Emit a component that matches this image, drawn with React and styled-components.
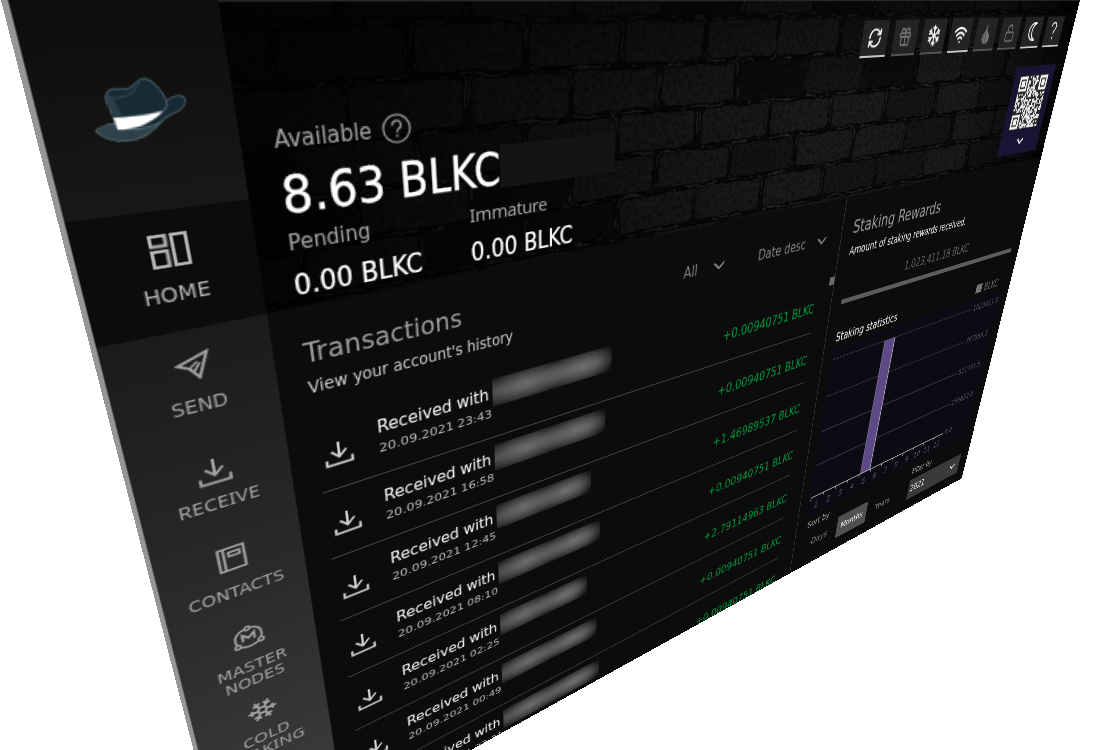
import React from "react";
import styled, { createGlobalStyle, css } from "styled-components";
import { RefreshCw, Gift, Wifi, LockOpen, Snowflake } from "lucide-react";
import { FaRegSnowflake } from "react-icons/fa";

const W = 1100;
const H = 726;

// Screen positions of the window's corners: top-left, top-right, bottom-right, bottom-left.
const CORNERS = [[8, 0], [1080, 0], [961.7, 478.3], [231.7, 882.4]];

function perspective([p0, p1, p2, p3], w, h) {
  const dx1 = p1[0] - p2[0], dx2 = p3[0] - p2[0], sx = p0[0] - p1[0] + p2[0] - p3[0];
  const dy1 = p1[1] - p2[1], dy2 = p3[1] - p2[1], sy = p0[1] - p1[1] + p2[1] - p3[1];
  const det = dx1 * dy2 - dx2 * dy1;
  const g = (sx * dy2 - dx2 * sy) / det;
  const k = (dx1 * sy - sx * dy1) / det;
  const a = p1[0] - p0[0] + g * p1[0], b = p3[0] - p0[0] + k * p3[0];
  const d = p1[1] - p0[1] + g * p1[1], e = p3[1] - p0[1] + k * p3[1];
  return `matrix3d(${[a / w, d / w, 0, g / w, b / h, e / h, 0, k / h, 0, 0, 1, 0, p0[0], p0[1], 0, 1]
    .map((n) => n.toFixed(9)).join(",")})`;
}

const Global = createGlobalStyle`
  html, body { margin: 0; background: #fff; }
  body { width: 1102px; height: 750px; overflow: hidden; }
  * { box-sizing: border-box; }
`;

const Scene = styled.div`
  width: 1102px;
  height: 750px;
  overflow: hidden;
  background: #fff;
`;

const Window = styled.div`
  display: flex;
  width: ${W}px;
  height: ${H}px;
  transform-origin: 0 0;
  transform: ${perspective(CORNERS, W, H)};
  background: #0c0c0c;
  box-shadow: -3px 0 0 #969696;
  color: #d0d0d0;
  font-family: "DejaVu Sans Condensed", "DejaVu Sans", sans-serif;
  font-stretch: condensed;
  white-space: nowrap;
`;

const Sidebar = styled.nav`
  width: 100px;
  height: ${H}px;
  overflow: hidden;
  background: linear-gradient(#1a1a1a 180px, #404040);
  display: flex;
  flex-direction: column;
`;

const LogoBox = styled.div`
  flex: none;
  height: 120px;
  display: flex;
  align-items: center;
  justify-content: center;
  background: linear-gradient(#0d0d0d, #181818);
`;

const NavItem = styled.div`
  flex: none;
  height: 81px;
  padding-top: ${(p) => p.$top || 15}px;
  display: flex;
  flex-direction: column;
  align-items: center;
  gap: ${(p) => p.$gap || 10}px;
  color: ${(p) => (p.$active ? "#b4b4b4" : "#a2a2a2")};
  background: ${(p) => (p.$active ? "#0c0c0c" : "transparent")};
  svg { display: block; flex: none; }
`;

const NavLabel = styled.div`
  font-family: ${(p) => (p.$serifI ? '"Noto Sans", sans-serif' : "inherit")};
  font-size: 14px;
  line-height: 15px;
  text-align: center;
  white-space: pre;
  padding-right: 1px;
`;

const Page = styled.div`
  width: 1000px;
  height: ${H}px;
  overflow: hidden;
  display: flex;
  flex-direction: column;
`;

const Header = styled.header`
  flex: none;
  height: 201px;
  display: grid;
  grid-template: 201px / 1000px;
  > * { grid-area: 1 / 1; }
`;

const HeaderRow = styled.div`
  position: relative;
  display: flex;
  justify-content: space-between;
  padding-left: 20px;
`;

const Balances = styled.div`
  padding-top: 74px;
  display: flex;
  flex-direction: column;
  color: #fff;
`;

const AvailableRow = styled.div`
  display: flex;
  align-items: center;
  gap: 7px;
  height: 20px;
  margin-top: -0.5px;
`;

const Caption = styled.div`
  font-size: ${(p) => p.$size || 15.7}px;
  line-height: 20px;
  color: #a4a4a4;
  font-family: ${(p) => (p.$serifI ? '"Noto Sans", sans-serif' : "inherit")};
  letter-spacing: ${(p) => p.$tracking || 0}px;
`;

const Total = styled.div`
  margin-top: 7px;
  height: 40px;
  display: flex;
  font-size: 35.2px;
  line-height: 40px;
  -webkit-text-stroke: 0.3px #fff;
`;

const Redaction = styled.div`
  width: 107px;
  height: 33px;
  margin-top: 2px;
  background: #141414;
`;

const SubBalances = styled.div`
  margin-top: 3.5px;
  display: grid;
  grid-template-columns: 133.5px auto;
`;

const SubValue = styled.div`
  margin-top: 8.5px;
  font-size: 20.5px;
  line-height: 24px;
  -webkit-text-stroke: 0.2px #fff;
`;

const HeaderSide = styled.div`
  padding: 19px 20px 0 0;
  display: flex;
  flex-direction: column;
  align-items: flex-end;
`;

const Toolbar = styled.div`
  display: flex;
  gap: 10px;
  margin-right: 7px;
`;

const Tool = styled.div`
  width: 39.5px;
  height: 36px;
  display: flex;
  align-items: center;
  justify-content: center;
  background: #232323;
  border-bottom: 2px solid ${(p) => (p.$on ? "#c8c8c8" : "#555")};
  color: ${(p) => (p.$bright ? "#f4f4f4" : "#747474")};
  svg { display: block; }
`;

const QrCard = styled.div`
  width: 92px;
  height: 111px;
  margin-top: 22px;
  padding-top: 11px;
  background: #1a1434;
  display: flex;
  flex-direction: column;
  align-items: center;
  gap: 11px;
  svg { display: block; }
`;

const Main = styled.main`
  flex: 1;
  display: flex;
`;

const History = styled.section`
  width: 601px;
  padding-left: 20px;
`;

const HistoryHead = styled.div`
  height: 92px;
  display: flex;
  justify-content: space-between;
`;

const Heading = styled.div`
  padding-top: 22.5px;
`;

const Title = styled.div`
  font-size: 22px;
  line-height: 28px;
  color: #9a9a9a;
`;

const Subtitle = styled.div`
  margin-top: ${(p) => p.$gap || 4.5}px;
  font-size: ${(p) => p.$size || 13.6}px;
  line-height: 18px;
  color: ${(p) => (p.$bright ? "#f4f4f4" : "#cacaca")};
`;

const Filters = styled.div`
  padding: 35px 24px 0 0;
  display: flex;
  align-items: flex-start;
`;

const Filter = styled.div`
  width: ${(p) => p.$w}px;
  display: flex;
  align-items: center;
  justify-content: space-between;
  font-size: 15.7px;
  line-height: 20px;
  color: #828282;
  & + & { margin-left: 46px; }
`;

const ListArea = styled.div`
  display: flex;
  justify-content: space-between;
`;

const List = styled.div`
  width: 553px;
`;

const Row = styled.div`
  height: 65.5px;
  padding-left: 6px;
  display: flex;
  align-items: flex-start;
  border-bottom: 1px solid #484848;
`;

const RowIcon = styled.div`
  width: 22px;
  margin: 22.5px 20px 0 -1px;
  color: #d0d0d0;
  svg { display: block; }
`;

const RowText = styled.div`
  flex: 1;
  padding-top: 12px;
`;

const RowTitle = styled.div`
  display: flex;
  height: 20px;
  font-size: 15.7px;
  letter-spacing: -0.1px;
  line-height: 20px;
  color: #f6f6f6;
`;

const Hidden = styled.div`
  width: ${(p) => p.$w}px;
  height: 27px;
  margin: -4px 0 0 4px;
  background:
    radial-gradient(ellipse 36% 62% at 27% 50%, rgba(112, 112, 112, .9), rgba(80, 80, 80, 0) 100%),
    radial-gradient(ellipse 36% 62% at 73% 50%, rgba(116, 116, 116, .9), rgba(80, 80, 80, 0) 100%),
    linear-gradient(90deg, rgba(12, 12, 12, 0) 85%, #0c0c0c 101%),
    linear-gradient(#202020, #424242 45%, #424242 55%, #202020);
`;

const RowDate = styled.div`
  margin-top: 2px;
  font-family: "DejaVu Sans", sans-serif;
  font-stretch: normal;
  font-size: 11.2px;
  line-height: 16px;
  color: #bcbcbc;
`;

const Amount = styled.div`
  margin-top: 25px;
  font-size: 15.9px;
  line-height: 20px;
  color: #009a3c;
`;

const Thumb = styled.div`
  width: 8px;
  height: 10px;
  margin-top: 1px;
  background: #6a6a6a;
`;

const Staking = styled.aside`
  width: 399px;
  border-left: 1px solid #383838;
  padding: 24px 20px 0 18px;
`;

const Reward = styled.div`
  margin-top: 21px;
  text-align: center;
  font-size: 16px;
  line-height: 20px;
  color: #626262;
`;

const Rule = styled.div`
  height: 6px;
  margin-top: 10px;
  background: #5c5c5c;
`;

const ChartHead = styled.div`
  margin-top: 33.5px;
  padding-right: 14px;
  display: flex;
  justify-content: space-between;
  font-size: 15.3px;
  line-height: 20px;
  color: #fff;
`;

const Legend = styled.div`
  display: flex;
  align-items: center;
  gap: 6px;
  color: #6a6a6a;
  &::before {
    content: "";
    width: 14px;
    height: 13px;
    margin-top: -3px;
    background: #747474;
  }
`;

const Plot = styled.svg`
  display: block;
  margin: 3px 0 0 -3px;
`;

const Controls = styled.div`
  margin-top: 7px;
  display: flex;
  justify-content: space-between;
`;

const ControlLabel = styled.div`
  padding-left: ${(p) => p.$pad || 0}px;
  font-size: 13.5px;
  line-height: 16px;
  color: #a4a4a4;
`;

const Segments = styled.div`
  margin-top: 6px;
  display: flex;
  gap: 4px;
`;

const Segment = styled.div`
  width: 64px;
  height: 37px;
  font-size: 14.5px;
  line-height: 37px;
  text-align: center;
  color: #808080;
  ${(p) => p.$active && css`
    background: #505050;
    color: #fff;
  `}
`;

const Select = styled.div`
  width: 131px;
  height: 36px;
  margin-top: 8px;
  padding: 0 12px 0 4px;
  display: flex;
  align-items: center;
  justify-content: space-between;
  background: #3a3a3a;
  color: #fff;
  font-size: 16px;
`;

const Chevron = ({ w = 15, h = 8, color = "#8a8a8a", sw = 2 }) => (
  <svg width={w} height={h} viewBox="0 0 15 8" fill="none" stroke={color} strokeWidth={sw}>
    <path d="M1 1l6.5 6L14 1" />
  </svg>
);

const Help = () => (
  <svg width="21" height="21" viewBox="0 0 21 21" fill="none" stroke="#8c8c8c">
    <circle cx="10.5" cy="10.5" r="9.6" strokeWidth="1.4" />
    <path d="M7.4 8.2a3.1 3 0 1 1 4.7 2.5c-1.2.8-1.6 1.2-1.6 2.5" strokeWidth="1.5" />
    <path d="M10.5 14.8v1.6" strokeWidth="1.6" />
  </svg>
);

const Hat = () => (
  <svg width="50" height="40" viewBox="0 0 50 40">
    <g transform="matrix(.1678 .0123 -.0339 .1883 -34.79 -47.34)" stroke="#53656d" strokeWidth="4" strokeLinejoin="round">
      <path fill="#162a33" d="M345 360C400 350 450 335 500 300C520 284 542 280 552 290C562 300 556 318 540 328C515 342 495 350 480 366C450 400 400 400 352 388Z" />
      <path fill="#2f414a" d="M343 368C315 373 296 380 287 391C310 415 345 425 380 423C430 419 462 393 486 362C445 385 400 392 352 388Z" />
      <path fill="#182b34" d="M340 352L317 298C315 278 327 267 347 266L384 265C403 259 408 234 432 235C462 243 488 280 500 304C502 318 498 326 488 332Q430 348 340 352Z" />
      <path fill="#2b3e47" stroke="none" d="M341 350L319 298C318 284 330 286 340 294L365 348Z" />
      <path fill="none" stroke="#3b4e57" d="M321 285C340 300 350 292 384 284C400 278 406 262 416 246" />
      <path fill="#fff" stroke="none" d="M339 352Q420 350 488 332C456 368 410 387 352 388Z" />
    </g>
  </svg>
);

const HomeIcon = () => (
  <svg width="22" height="22" viewBox="0 0 22 22" fill="none" stroke="currentColor" strokeWidth="2">
    <path d="M1 1h8.4v6.6H1zM1 11h8.4v10H1zM13 1h8v20h-8z" />
  </svg>
);

const SendIcon = () => (
  <svg width="22" height="22" viewBox="0 0 22 22" fill="none" stroke="currentColor" strokeWidth="1.9">
    <path d="M20.4 2.6L1.8 9.6l6.6 3.4 5.4 7.6z" />
    <path d="M8.6 13l5-4.2M11 15.8l4.2-6" strokeWidth="1.5" />
  </svg>
);

const TrayIcon = ({ size = 22 }) => (
  <svg width={size} height={size} viewBox="0 0 22 22" fill="none" stroke="currentColor" strokeWidth="2">
    <path d="M11 1v13M5.2 8.6l5.8 5.8 5.8-5.8M1.2 15.5v5h19.6v-5" />
  </svg>
);

const BookIcon = () => (
  <svg width="20" height="22" viewBox="0 0 20 22" fill="none" stroke="currentColor" strokeWidth="1.8">
    <path d="M1.2 1.2h17.6v19.6H1.2zM4.8 1v20M8.3 5.2h7.4v3.4H8.3z" />
  </svg>
);

const NodesIcon = () => (
  <svg width="25" height="22" viewBox="0 0 25 22" fill="none" stroke="currentColor" strokeWidth="1.7">
    <path d="M9.8 2.6C5.6 3.4 2.7 7 2.9 11.4c0 1.8.4 3.2 1 4.4M15.2 2.6c4.2.8 7.1 4.4 6.9 8.8 0 1.8-.4 3.2-1 4.4M6 19c3.8 2.6 9.2 2.6 13 0" />
    <circle cx="12.5" cy="2.6" r="1.9" />
    <circle cx="4" cy="17.9" r="1.9" />
    <circle cx="21" cy="17.9" r="1.9" />
    <path d="M8.3 14.6V8l4.2 4.2L16.7 8v6.6" strokeWidth="1.9" />
  </svg>
);

const OnionIcon = () => (
  <svg width="16" height="23" viewBox="0 0 15 21" fill="currentColor">
    <path d="M9.5 0C8.6 2 8.4 4 9 6.5c.6 1.8 5.4 3.5 5.4 8.1 0 3.6-2.8 6-6.6 6s-6.7-2.4-6.7-6C1.1 10.5 5.3 9 6.2 7 6.8 4.7 7.3 2 9.5 0z" />
    <path d="M7.4 9v10M4.7 11.5c-1.5 2.5-1 5 .3 6.5" fill="none" stroke="#242424" strokeWidth=".8" />
  </svg>
);

const MoonIcon = () => (
  <svg width="20" height="24" viewBox="0 0 20 24" fill="none" stroke="currentColor" strokeWidth="2" strokeLinejoin="round">
    <path d="M17 2.2C9.500 1 3 5.500 3 12s6.500 11 14 9.800C12 20 9.300 16.500 9.300 12S12 4 17 2.200z" />
  </svg>
);

const QuestionIcon = () => (
  <svg width="14" height="22" viewBox="0 0 12 20" fill="none" stroke="currentColor" strokeWidth="1.7">
    <path d="M1.4 5.2C1.6 2.6 3.4 1.2 6 1.2s4.6 1.5 4.6 3.900C10.6 8.6 6 9 6 13.2" />
    <path d="M6 16.2v2.6" />
  </svg>
);

function noise(i) {
  const s = Math.sin(i * 12.9898 + 4.137) * 43758.5453;
  return s - Math.floor(s);
}

const ROWS = [-23, 13.5, 50, 88, 124, 160, 196];

const Bricks = () => {
  const bricks = [];
  ROWS.forEach((y, r) => {
    const h = (ROWS[r + 1] ?? y + 36) - y;
    const start = r % 2 === 1 ? -61 : -19;
    for (let c = 0; c < 13; c++) {
      const n = noise(r * 17 + c * 3 + 1);
      const x = start + c * 88 + (noise(r * 5 + c) - 0.5) * 4;
      const shade = Math.round(n < 0.18 ? 15 : 22 + n * 9);
      bricks.push(
        <g key={`${r}-${c}`}>
          <rect x={x + 0.5} y={y + 0.8} width="87" height={h - 1.6} rx="6" fill="none" stroke="#3a3a3a" strokeWidth="1"
            strokeDasharray={`${8 + n * 18} ${20 + n * 24} 4 14`} />
          <rect x={x + 2.2} y={y + 2.2} width="83.6" height={h - 4.4} rx="6"
            fill={`rgb(${shade},${shade},${shade})`} stroke="#080808" strokeWidth="1.8" />
        </g>
      );
    }
  });
  return (
    <svg width="1000" height="201" viewBox="0 0 1000 201">
      <defs>
        <filter id="rough" x="0" y="0" width="100%" height="100%">
          <feTurbulence type="fractalNoise" baseFrequency="0.05" numOctaves="2" seed="4" result="n" />
          <feDisplacementMap in="SourceGraphic" in2="n" scale="5" xChannelSelector="R" yChannelSelector="G" />
        </filter>
        <filter id="grain" x="0" y="0" width="100%" height="100%">
          <feTurbulence type="fractalNoise" baseFrequency="0.25" numOctaves="3" seed="8" />
          <feColorMatrix values="0 0 0 0 0  0 0 0 0 0  0 0 0 0 0  1.1 0 0 0 -.42" />
        </filter>
        <linearGradient id="shade">
          <stop offset="0" stopColor="#000" stopOpacity=".82" />
          <stop offset=".15" stopColor="#000" stopOpacity=".55" />
          <stop offset=".4" stopColor="#000" stopOpacity=".15" />
          <stop offset=".55" stopColor="#000" stopOpacity="0" />
          <stop offset=".8" stopColor="#000" stopOpacity=".05" />
          <stop offset="1" stopColor="#000" stopOpacity=".75" />
        </linearGradient>
        <linearGradient id="fall" x2="0" y2="1">
          <stop offset="0" stopColor="#000" stopOpacity=".4" />
          <stop offset=".4" stopColor="#000" stopOpacity="0" />
        </linearGradient>
      </defs>
      <rect width="1000" height="201" fill="#0b0b0b" />
      <g filter="url(#rough)">{bricks}</g>
      <rect width="1000" height="201" filter="url(#grain)" />
      <rect width="1000" height="201" fill="url(#shade)" />
      <rect width="1000" height="201" fill="url(#fall)" />
      <rect width="1000" height="1" fill="#20282c" />
    </svg>
  );
};

const QR_N = 25;
const Qr = () => {
  const cells = [];
  const inFinder = (x, y) =>
    (x < 8 && y < 8) || (x > QR_N - 9 && y < 8) || (x < 8 && y > QR_N - 9);
  for (let y = 0; y < QR_N; y++)
    for (let x = 0; x < QR_N; x++)
      if (!inFinder(x, y) && noise(x * 31 + y * 7.3) > 0.46)
        cells.push(<rect key={`${x}-${y}`} x={x} y={y} width="1.05" height="1.05" />);
  const far = QR_N - 7;
  return (
    <svg width="67" height="68" viewBox="-.5 -.5 26 26" fill="#f4f4f4" preserveAspectRatio="none">
      <rect x="-.5" y="-.5" width="26" height="26" fill="#262626" />
      {cells}
      {[[0, 0], [far, 0], [0, far]].map(([x, y]) => (
        <g key={`${x}.${y}`}>
          <rect x={x + 0.65} y={y + 0.65} width="5.7" height="5.7" fill="none" stroke="#f4f4f4" strokeWidth="1.3" />
          <rect x={x + 2} y={y + 2} width="3" height="3" />
        </g>
      ))}
    </svg>
  );
};

const AXIS = [["1023411.0", 16], ["767558.3", 67], ["511705.5", 118], ["255852.8", 169], ["0.0", 220]];

const StakingChart = () => (
  <Plot width="363" height="250" viewBox="-3 0 363 250" fontSize="13" fill="#585466">
    <rect x="-3" width="363" height="250" fill="#0c0a13" />
    {AXIS.map(([label, y], i) => (
      <g key={label}>
        {i < 4 && <path d={`M1.5 ${y}H291.5`} stroke="#5a5862" strokeDasharray={i < 2 ? "4 2" : "none"} />}
        <text x="295" y={y + 4}>{label}</text>
      </g>
    ))}
    <rect x="100" y="16" width="20.5" height="204" fill="#5e4a86" />
    <path d="M100 16V220" stroke="#8d86a0" strokeWidth="1" />
    <path d="M120.5 16V220" stroke="#b5b0c2" strokeWidth="1.6" />
    <path d="M1.5 220H291.5" stroke="#b8b8b8" strokeWidth="1.6" />
    {Array.from({ length: 12 }, (_, i) => (
      <g key={i}>
        <path d={`M${1.5 + i * 24.17} 220v5`} stroke="#b8b8b8" strokeWidth="1.2" />
        <text x={13.6 + i * 24.17} y="240" fontSize="14" textAnchor="middle">{i + 1}</text>
      </g>
    ))}
  </Plot>
);

const NAV = [
  { label: "HOME", icon: <HomeIcon />, active: true, gap: 10.5 },
  { label: "SEND", icon: <SendIcon />, gap: 12 },
  { label: "RECEIVE", icon: <TrayIcon />, top: 17.5, gap: 8.5, serifI: true },
  { label: "CONTACTS", icon: <BookIcon />, gap: 12.5 },
  { label: "MASTER\nNODES", icon: <NodesIcon />, top: 12, gap: 11.5 },
  { label: "COLD\nSTAKING", icon: <Snowflake size={24} strokeWidth={1.9} />, top: 10, gap: 9, serifI: true },
];

const TOOLS = [
  { icon: <RefreshCw size={22} strokeWidth={2.3} />, bright: true, on: true },
  { icon: <Gift size={22} strokeWidth={2} /> },
  { icon: <FaRegSnowflake size={22} />, bright: true },
  { icon: <Wifi size={24} strokeWidth={2.5} />, bright: true, on: true },
  { icon: <OnionIcon /> },
  { icon: <LockOpen size={21} strokeWidth={2} /> },
  { icon: <MoonIcon />, bright: true, on: true },
  { icon: <QuestionIcon />, bright: true, on: true },
];

const TRANSACTIONS = [
  ["20.09.2021 23:43", "+0.00940751 BLKC", 124],
  ["20.09.2021 16:58", "+0.00940751 BLKC", 119],
  ["20.09.2021 12:45", "+1.46989537 BLKC", 104],
  ["20.09.2021 08:10", "+0.00940751 BLKC", 117],
  ["20.09.2021 02:25", "+2.79114963 BLKC", 102],
  ["20.09.2021 00:49", "+0.00940751 BLKC", 116],
  ["19.09.2021 22:31", "+0.00940751 BLKC", 121],
];

export default function App() {
  return (
    <Scene>
      <Global />
      <Window>
        <Sidebar>
          <LogoBox><Hat /></LogoBox>
          {NAV.map((n) => (
            <NavItem key={n.label} $active={n.active} $top={n.top} $gap={n.gap}>
              {n.icon}
              <NavLabel $serifI={n.serifI}>{n.label}</NavLabel>
            </NavItem>
          ))}
        </Sidebar>
        <Page>
          <Header>
            <Bricks />
            <HeaderRow>
              <Balances>
                <AvailableRow>
                  <Caption>Available</Caption>
                  <Help />
                </AvailableRow>
                <Total>8.63 BLKC<Redaction /></Total>
                <SubBalances>
                  <div>
                    <Caption>Pending</Caption>
                    <SubValue>0.00 BLKC</SubValue>
                  </div>
                  <div>
                    <Caption $serifI $size={15.2} $tracking={-0.35}>Immature</Caption>
                    <SubValue>0.00 BLKC</SubValue>
                  </div>
                </SubBalances>
              </Balances>
              <HeaderSide>
                <Toolbar>
                  {TOOLS.map((t, i) => (
                    <Tool key={i} $bright={t.bright} $on={t.on}>{t.icon}</Tool>
                  ))}
                </Toolbar>
                <QrCard>
                  <Qr />
                  <Chevron w={15} h={9} color="#f4f4f4" sw={2.4} />
                </QrCard>
              </HeaderSide>
            </HeaderRow>
          </Header>
          <Main>
            <History>
              <HistoryHead>
                <Heading>
                  <Title>Transactions</Title>
                  <Subtitle>View your account's history</Subtitle>
                </Heading>
                <Filters>
                  <Filter $w={53}>All<Chevron /></Filter>
                  <Filter $w={104}>Date desc<Chevron /></Filter>
                </Filters>
              </HistoryHead>
              <ListArea>
                <List>
                  {TRANSACTIONS.map(([date, amount, w]) => (
                    <Row key={date}>
                      <RowIcon><TrayIcon /></RowIcon>
                      <RowText>
                        <RowTitle>Received with<Hidden $w={w} /></RowTitle>
                        <RowDate>{date}</RowDate>
                      </RowText>
                      <Amount>{amount}</Amount>
                    </Row>
                  ))}
                </List>
                <Thumb />
              </ListArea>
            </History>
            <Staking>
              <Title>Staking Rewards</Title>
              <Subtitle $bright $gap={5} $size={13.8}>Amount of staking rewards received.</Subtitle>
              <Reward>1,023,411.18 BLKC</Reward>
              <Rule />
              <ChartHead>
                Staking statistics
                <Legend>BLKC</Legend>
              </ChartHead>
              <StakingChart />
              <Controls>
                <div>
                  <ControlLabel $pad={3}>Sort by</ControlLabel>
                  <Segments>
                    <Segment>Days</Segment>
                    <Segment $active>Months</Segment>
                    <Segment>Years</Segment>
                  </Segments>
                </div>
                <div>
                  <ControlLabel>Filter by</ControlLabel>
                  <Select>2021<Chevron w={15} h={9} color="#f0f0f0" sw={2.2} /></Select>
                </div>
              </Controls>
            </Staking>
          </Main>
        </Page>
      </Window>
    </Scene>
  );
}
